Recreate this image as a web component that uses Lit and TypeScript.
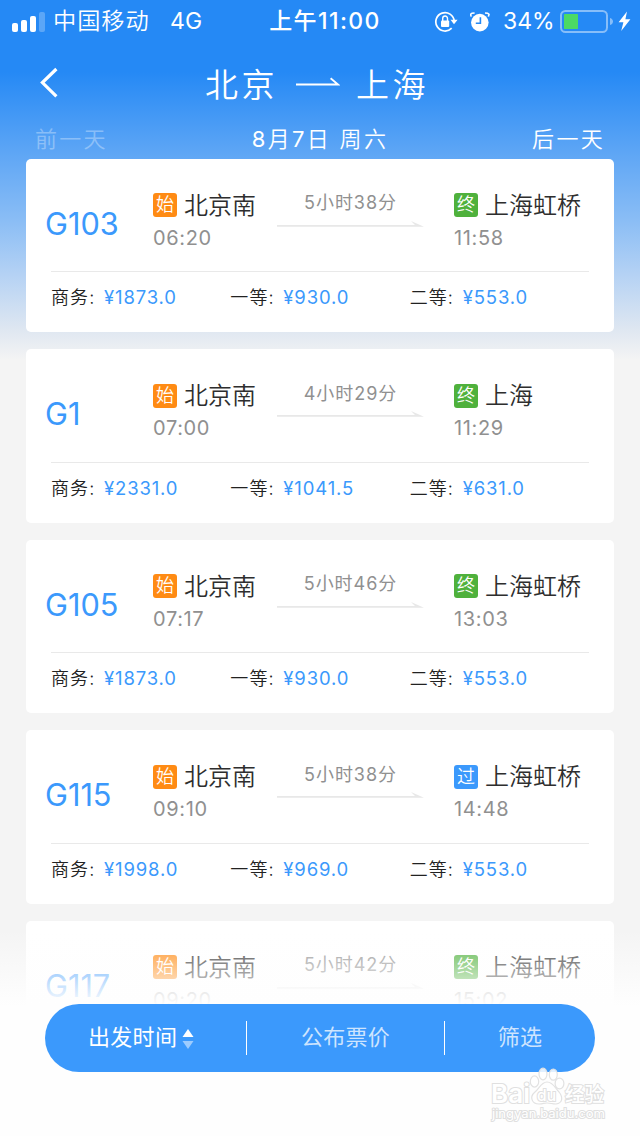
import { LitElement, html, css, svg } from "lit";
import { customElement, property } from "lit/decorators.js";

interface Train {
  no: string;
  from: string;
  depart: string;
  duration: string;
  mark: "终" | "过";
  to: string;
  arrive: string;
  prices: string[];
}

const TRAINS: Train[] = [
  { no: "G103", from: "北京南", depart: "06:20", duration: "5小时38分", mark: "终", to: "上海虹桥", arrive: "11:58", prices: ["1873.0", "930.0", "553.0"] },
  { no: "G1", from: "北京南", depart: "07:00", duration: "4小时29分", mark: "终", to: "上海", arrive: "11:29", prices: ["2331.0", "1041.5", "631.0"] },
  { no: "G105", from: "北京南", depart: "07:17", duration: "5小时46分", mark: "终", to: "上海虹桥", arrive: "13:03", prices: ["1873.0", "930.0", "553.0"] },
  { no: "G115", from: "北京南", depart: "09:10", duration: "5小时38分", mark: "过", to: "上海虹桥", arrive: "14:48", prices: ["1998.0", "969.0", "553.0"] },
  { no: "G117", from: "北京南", depart: "09:20", duration: "5小时42分", mark: "终", to: "上海虹桥", arrive: "15:02", prices: [] },
];

const SEATS = ["商务:", "一等:", "二等:"];

@customElement("status-bar")
export class StatusBar extends LitElement {
  static styles = css`
    :host { display: grid; grid-template-columns: 257px 134px 1fr; align-items: center; height: 41px; color: #fff; white-space: nowrap; font-size: 23px; line-height: 43px; }
    .left, .right { display: flex; align-items: center; height: 41px; }
    .signal { display: block; margin: 0 8px 0 12px; }
    .carrier { letter-spacing: 1px; font-size: 23.2px; width: 117px; font-weight: 350; }
    .net { letter-spacing: 0.2px; }
    .time { text-align: center; font-weight: 500; letter-spacing: 1.4px; padding-left: 2px; }
    .lock { margin-left: 43px; }
    .alarm { margin-left: 12px; }
    .pct { margin-left: 13px; width: 57px; letter-spacing: 0; }
  `;
  render() {
    return html`
      <div class="left">
        <svg class="signal" width="33" height="20" viewBox="0 0 33 20" fill="#fff">
          <rect x="0" y="11" width="6" height="9" rx="2" />
          <rect x="9" y="8" width="6" height="12" rx="2" />
          <rect x="18" y="4" width="6" height="16" rx="2" />
          <rect x="27" y="0" width="6" height="20" rx="2" opacity=".25" />
        </svg>
        <span class="carrier">中国移动</span><span class="net">4G</span>
      </div>
      <div class="time">上午11:00</div>
      <div class="right">
        <svg class="lock" width="24" height="22" viewBox="0 0 24 22" fill="none" stroke="#fff">
          <path d="M17.7 17.2A9.2 9.2 0 1 1 20.2 10" stroke-width="1.7" />
          <path d="M16.5 8.8H23.6L20 13.2Z" fill="#fff" stroke="none" />
          <rect x="7" y="9.4" width="8.2" height="6.6" rx="1" fill="#fff" stroke="none" />
          <path d="M8.7 10V7.6a2.4 2.6 0 0 1 4.8 0V10" stroke-width="1.4" />
        </svg>
        <svg class="alarm" width="20" height="20" viewBox="0 0 20 20">
          <circle cx="9.8" cy="10.6" r="8.8" fill="#fff" />
          <path d="M10.4 5.2V11.2H5.8" fill="none" stroke="#2589f5" stroke-width="1.6" />
          <path d="M1.2 4.6 .6 2.4 2 1.2 4.6 1M18.4 4.6 19 2.4 17.6 1.2 15 1" fill="none" stroke="#fff" stroke-width="1.6" />
        </svg>
        <span class="pct">34%</span>
        <svg width="74" height="24" viewBox="0 0 74 24">
          <rect x="1" y="0" width="46" height="21" rx="4.5" fill="none" stroke="#fff" stroke-opacity=".45" stroke-width="2" transform="translate(0 1)" />
          <rect x="4" y="4" width="14" height="15" rx=".6" fill="#4cd964" />
          <path d="M50 8c4 1 4 6 0 7Z" fill="#fff" opacity=".45" />
          <path d="M67 1.500 58.6 12.300H63.400L61.2 21 70.4 9.2H65.4Z" fill="#fff" />
        </svg>
      </div>
    `;
  }
}

@customElement("train-card")
export class TrainCard extends LitElement {
  @property({ attribute: false }) train!: Train;

  static styles = css`
    :host { display: block; height: 173.5px; border-radius: 5px; background: #fff; white-space: nowrap; }
    .trip { display: grid; grid-template-columns: 108px 124px 147px 1fr; height: 112.7px; padding-left: 19px; }
    .no { padding-top: 41.4px; font-size: 30.7px; line-height: 48px; color: #3b99fc; letter-spacing: 0; }
    .stop { padding-top: 31px; }
    .stop.arrival { padding-left: 30px; }
    .name { display: flex; align-items: center; height: 31px; font-size: 24px; font-weight: 350; color: #2e2e2e; }
    .place { padding-top: 1.5px; line-height: 34px; }
    .tag { width: 24px; height: 24px; margin-right: 7px; border-radius: 3px; font-size: 18px; line-height: 23px; text-align: center; color: #fff; background: #ff8b14; }
    .tag.end { background: #4fb13c; }
    .tag.pass { background: #3b99fc; }
    .clock { padding-top: 1.4px; font-size: 20px; line-height: 32px; color: #909090; letter-spacing: 0.65px; }
    .span { padding-top: 27.5px; text-align: center; font-size: 18px; line-height: 33px; color: #909090; letter-spacing: 0.95px; }
    .arrow { display: block; margin-top: 0.5px; }
    .prices { display: grid; grid-template-columns: repeat(3, 1fr); margin: 0 25px; border-top: 1px solid #e9e9e9; font-size: 18px; line-height: 51px; color: #222; }
    .seat { display: flex; }
    .label { width: 53px; letter-spacing: 1.1px; font-weight: 350; }
    .yen { color: #3b99fc; font-size: 18.5px; letter-spacing: 0.85px; }
  `;
  render() {
    const t = this.train;
    return html`
      <div class="trip">
        <div class="no">${t.no}</div>
        <div class="stop">
          <div class="name"><span class="tag">始</span><span class="place">${t.from}</span></div>
          <div class="clock">${t.depart}</div>
        </div>
        <div class="span">
          ${t.duration}
          <svg class="arrow" width="147" height="8" viewBox="0 0 147 8">
            <path d="M0 5H138L134 1 147 6.8H0Z" fill="#e8e8e8" />
          </svg>
        </div>
        <div class="stop arrival">
          <div class="name"><span class="tag ${t.mark === "过" ? "pass" : "end"}">${t.mark}</span><span class="place">${t.to}</span></div>
          <div class="clock">${t.arrive}</div>
        </div>
      </div>
      <div class="prices">
        ${t.prices.map((p, i) => html`<div class="seat"><span class="label">${SEATS[i]}</span><span class="yen">¥${p}</span></div>`)}
      </div>
    `;
  }
}

@customElement("app-root")
export class AppRoot extends LitElement {
  static styles = css`
    :host { display: block; position: relative; width: 640px; height: 1136px; overflow: hidden; font-family: Inter, "Noto Sans CJK SC", sans-serif; font-weight: 400; background: linear-gradient(#2589f5 0, #2589f5 72px, #62a8f5 159px, #8abdf5 220px, #b5d2f4 275px, #dfe7f1 330px, #f4f4f4 360px); }
    .title { display: flex; align-items: center; height: 85px; color: #fff; font-size: 33px; font-weight: 350; letter-spacing: 3.5px; line-height: 85px; white-space: nowrap; }
    .title span { padding-top: 3px; }
    .back { margin: -2px 146px 0 39px; }
    .to { margin: -1px 16px 0 18px; }
    .days { display: grid; grid-template-columns: 1fr auto 1fr; height: 32.6px; padding: 0 35px; color: #fff; font-size: 22px; line-height: 27px; letter-spacing: 2.3px; white-space: nowrap; font-weight: 350; }
    .num { font-weight: 400; }
    .prev { opacity: .32; }
    .next { text-align: right; }
    .list { display: flex; flex-direction: column; gap: 17px; padding: 0 26px; }
    .fade { position: absolute; left: 0; right: 0; top: 930px; bottom: 0; background: linear-gradient(rgba(254,254,254,0) 0, #fefefe 76px); }
    .bar { position: absolute; left: 45px; top: 1004px; display: grid; grid-template-columns: 201px 1px 197px 1px 150px; align-items: center; width: 550px; height: 68px; border-radius: 34px; background: #3b99fc; color: rgba(255,255,255,.75); font-size: 22px; line-height: 66px; text-align: center; white-space: nowrap; letter-spacing: 0.3px; }
    .item { padding-bottom: 2px; }
    .active { display: flex; align-items: center; padding-left: 43px; color: #fff; }
    .sort { margin: 4px 0 0 5px; }
    .rule { height: 34px; background: #fff; }
    .mark { position: absolute; left: 486px; top: 1064px; }
  `;
  render() {
    return html`
      <status-bar></status-bar>
      <div class="title">
        <svg class="back" width="20" height="32" viewBox="0 0 20 32" fill="none" stroke="#fff" stroke-width="3.2"><path d="M17.4 2 3.4 15.6 17.4 29.4" /></svg>
        <span>北京</span>
        <svg class="to" width="44" height="12" viewBox="0 0 44 12" fill="none" stroke="#fff" stroke-width="1.8"><path d="M0 7.5H42L34.6 1.2" /></svg>
        <span>上海</span>
      </div>
      <div class="days"><span class="prev">前一天</span><span><span class="num">8</span>月<span class="num">7</span>日 周六</span><span class="next">后一天</span></div>
      <div class="list">${TRAINS.map((t) => html`<train-card .train=${t}></train-card>`)}</div>
      <div class="fade"></div>
      <div class="bar">
        <span class="item active">出发时间<svg class="sort" width="12" height="20" viewBox="0 0 12 20"><path d="M6 0 11.5 8H.5Z" fill="#fff" /><path d="M6 20 11.5 12H.5Z" fill="#fff" opacity=".5" /></svg></span>
        <span class="rule"></span><span class="item">公布票价</span><span class="rule"></span><span class="item">筛选</span>
      </div>
      <svg class="mark" width="130" height="64" viewBox="0 0 130 64">
        ${svg`<g fill="#fff" fill-opacity=".85" stroke="#e2e2e2" stroke-width="1.2">
          <ellipse cx="48.5" cy="17.5" rx="4.2" ry="5.6" />
          <ellipse cx="57" cy="10" rx="4" ry="5.8" />
          <ellipse cx="67.3" cy="10.6" rx="4" ry="5.6" />
          <ellipse cx="73.5" cy="19.5" rx="4.4" ry="5.4" />
          <path d="M61 18C55 18 53 25 49 28 43 33 46 40 53 40 57 40 58 39 61 39 65 39 66 40 70 40 77 39 77 33 73 28 69 24 67 18 61 18Z" />
        </g>
        <g paint-order="stroke" fill="#fff" stroke="#e0e0e0" stroke-width="2" font-family="Inter, 'Noto Sans CJK SC', sans-serif">
          <text x="5" y="38.5" font-size="26" font-weight="600" textLength="39" lengthAdjust="spacingAndGlyphs">Bai</text>
          <text x="51" y="36.5" font-size="16" font-weight="500" textLength="19" lengthAdjust="spacingAndGlyphs">du</text>
          <text x="79" y="37.5" font-size="20" font-weight="500" textLength="39" lengthAdjust="spacingAndGlyphs">经验</text>
          <text x="6" y="53.5" font-size="12.5" font-weight="400" textLength="113" lengthAdjust="spacingAndGlyphs">jingyan.baidu.com</text>
        </g>`}
      </svg>
    `;
  }
}
